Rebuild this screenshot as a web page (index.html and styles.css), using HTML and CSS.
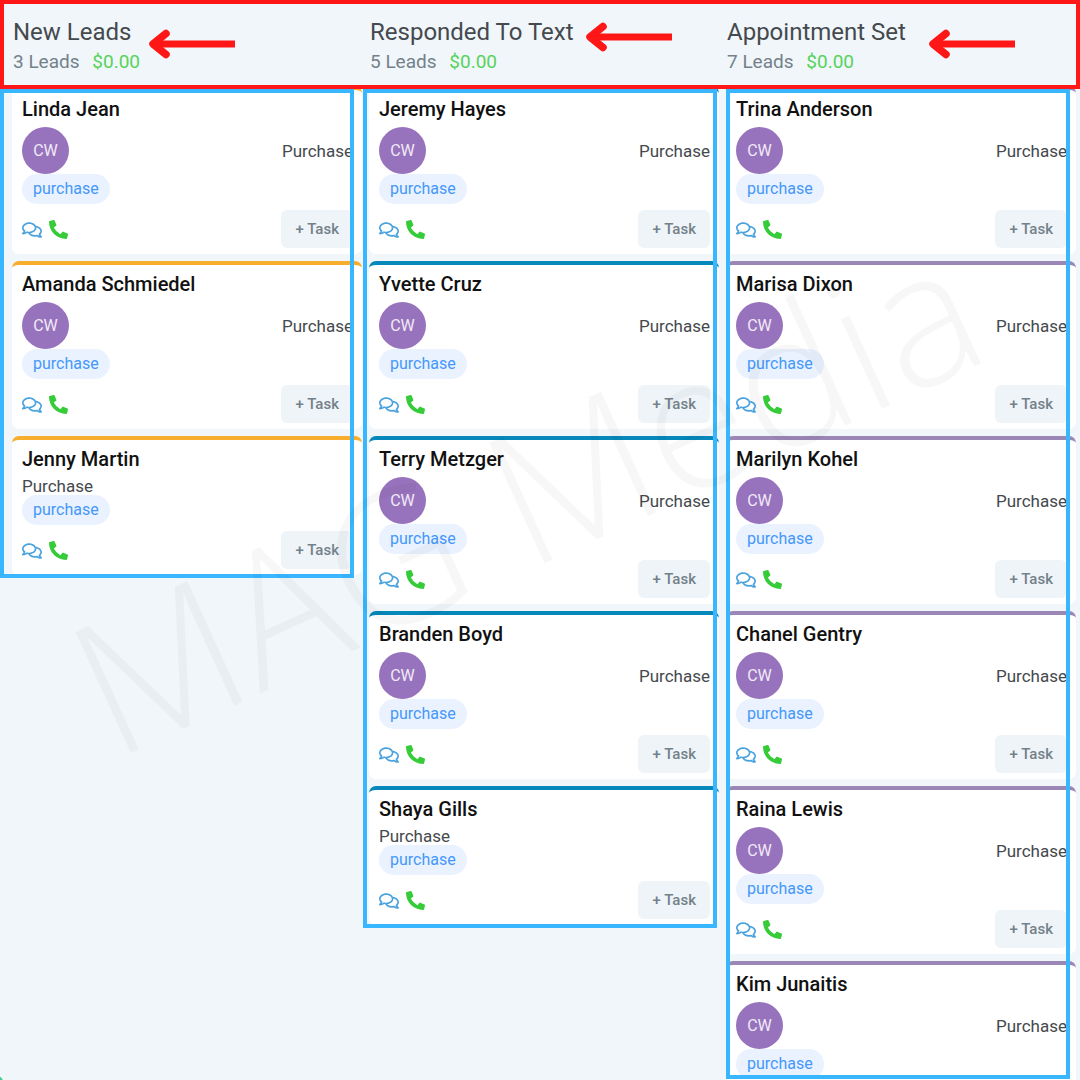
FILE: index.html
```html
<!DOCTYPE html>
<html lang="en">
<head>
    <meta charset="UTF-8">
    <meta name="viewport" content="width=device-width, initial-scale=1.0">
    <title>Leads</title>
    <link rel="stylesheet" href="styles.css">
</head>
<body>
    <svg class="sprite" aria-hidden="true">
        <symbol id="icon-comments" viewBox="0 0 576 512">
            <path d="M532 386.2c27.5-27.1 44-61.1 44-98.2 0-80-76.5-146.1-176.2-157.9C368.3 72.5 294.3 32 208 32 93.1 32 0 103.6 0 192c0 37 16.5 71 44 98.2-15.3 30.7-37.3 54.5-37.7 54.9-6.3 6.7-8.1 16.5-4.4 25 3.6 8.5 12 14 21.2 14 53.5 0 96.7-20.2 125.2-38.8 9.2 2.1 18.7 3.7 28.4 4.9C208.1 407.6 281.8 448 368 448c20.8 0 40.8-2.4 59.8-6.8C456.3 459.7 499.4 480 553 480c9.2 0 17.5-5.5 21.2-14 3.6-8.5 1.9-18.3-4.4-25-.4-.3-22.5-24.1-37.8-54.8zm-392.8-92.3L122.1 305c-14.1 9.1-28.5 16.3-43.1 21.4 2.7-4.7 5.4-9.7 8-14.8l15.5-31.1L77.7 256C64.2 242.6 48 220.7 48 192c0-60.7 73.3-112 160-112s160 51.3 160 112-73.3 112-160 112c-16.5 0-33-1.9-49-5.6l-19.8-4.5zM498.3 352l-24.7 24.4 15.5 31.1c2.6 5.1 5.3 10.1 8 14.8-14.6-5.1-29-12.3-43.1-21.4l-17.1-11.1-19.9 4.6c-16 3.7-32.5 5.6-49 5.6-54 0-102.2-20.1-131.3-49.7C338 339.5 416 272.9 416 192c0-3.4-.4-6.7-.7-10C479.7 196.5 528 238.8 528 288c0 28.7-16.2 50.6-29.7 64z"/>
        </symbol>
        <symbol id="icon-phone" viewBox="0 0 512 512">
            <path d="M497.39 361.8l-112-48a24 24 0 0 0-28 6.9l-49.6 60.6A370.66 370.66 0 0 1 130.6 204.11l60.6-49.6a23.94 23.94 0 0 0 6.9-28l-48-112A24.16 24.16 0 0 0 122.6.61l-104 24A24 24 0 0 0 0 48c0 256.5 207.9 464 464 464a24 24 0 0 0 23.4-18.6l24-104a24.29 24.29 0 0 0-14.01-27.6z"/>
        </symbol>
        <symbol id="icon-arrow" viewBox="0 0 88 30">
            <path d="M87 15H6" fill="none" stroke="currentColor" stroke-width="7"/>
            <path d="M18 4.5L5 15L18 25.5" fill="none" stroke="currentColor" stroke-width="7.5" stroke-linecap="round" stroke-linejoin="round"/>
        </symbol>
    </svg>

    <header class="stages">
        <div class="stage">
            <h2 class="stage-title">New Leads</h2>
            <p class="stage-info">3 Leads <span class="amount">$0.00</span></p>
            <svg class="arrow arrow-new"><use href="#icon-arrow"/></svg>
        </div>
        <div class="stage">
            <h2 class="stage-title">Responded To Text</h2>
            <p class="stage-info">5 Leads <span class="amount">$0.00</span></p>
            <svg class="arrow arrow-responded"><use href="#icon-arrow"/></svg>
        </div>
        <div class="stage">
            <h2 class="stage-title">Appointment Set</h2>
            <p class="stage-info">7 Leads <span class="amount">$0.00</span></p>
            <svg class="arrow arrow-appointment"><use href="#icon-arrow"/></svg>
        </div>
    </header>

    <main class="board">
        <section class="column column-new" aria-label="New Leads"></section>
        <section class="column column-responded" aria-label="Responded To Text"></section>
        <section class="column column-appointment" aria-label="Appointment Set"></section>
    </main>

    <div class="watermark">MAG Media</div>
    <div class="chat-dot"></div>

    <script>
        // owner: initials in the avatar, empty when nobody is assigned
        const leads = {
            '.column-new': [
                { name: 'Linda Jean', owner: 'CW' },
                { name: 'Amanda Schmiedel', owner: 'CW' },
                { name: 'Jenny Martin', owner: '' }
            ],
            '.column-responded': [
                { name: 'Jeremy Hayes', owner: 'CW' },
                { name: 'Yvette Cruz', owner: 'CW' },
                { name: 'Terry Metzger', owner: 'CW' },
                { name: 'Branden Boyd', owner: 'CW' },
                { name: 'Shaya Gills', owner: '' }
            ],
            '.column-appointment': [
                { name: 'Trina Anderson', owner: 'CW' },
                { name: 'Marisa Dixon', owner: 'CW' },
                { name: 'Marilyn Kohel', owner: 'CW' },
                { name: 'Chanel Gentry', owner: 'CW' },
                { name: 'Raina Lewis', owner: 'CW' },
                { name: 'Kim Junaitis', owner: 'CW' }
            ]
        };

        function card(lead) {
            const avatar = lead.owner ? `<span class="avatar">${lead.owner}</span>` : '';
            return `
                <article class="card">
                    <h3 class="card-name">${lead.name}</h3>
                    <div class="card-row">${avatar}<span class="card-type">Purchase</span></div>
                    <span class="tag">purchase</span>
                    <div class="card-actions">
                        <button class="icon-btn" type="button" aria-label="Messages"><svg class="icon-comments"><use href="#icon-comments"/></svg></button>
                        <button class="icon-btn" type="button" aria-label="Call"><svg class="icon-phone"><use href="#icon-phone"/></svg></button>
                        <button class="task-btn" type="button">+ Task</button>
                    </div>
                </article>`;
        }

        for (let selector in leads) {
            document.querySelector(selector).innerHTML = leads[selector].map(card).join('');
        }
    </script>
</body>
</html>
```

FILE: styles.css
```css
* {
    margin: 0;
    padding: 0;
    box-sizing: border-box;
}
body {
    position: relative;
    display: flex;
    flex-direction: column;
    height: 100vh;
    overflow: hidden;
    background-color: #f1f6fa;
    font-family: Roboto, "Liberation Sans", sans-serif;
    color: #44494e;
}
button {
    border: 0;
    font-family: inherit;
    cursor: pointer;
}
.sprite {
    position: absolute;
    width: 0;
    height: 0;
}

/* stage headers */
.stages,
.board {
    display: grid;
    grid-template-columns: repeat(3, 1fr);
    gap: 7px;
    padding: 0 4px 0 12px;
}
.stages {
    position: relative;
    z-index: 1;
    flex: none;
    padding-top: 15px;
    padding-bottom: 11px;
}
.stages::after {
    content: "";
    position: absolute;
    inset: 0 0 -3px;
    border: 4px solid #ff1616;
}
.stage {
    position: relative;
    padding-left: 1px;
}
.stage-title {
    font-size: 24px;
    line-height: 34px;
    font-weight: 400;
}
.stage-info {
    font-size: 19px;
    line-height: 26px;
    color: #73818a;
}
.amount {
    margin-left: 8px;
    color: #56d35b;
}
.arrow {
    position: absolute;
    width: 88px;
    height: 30px;
    color: #ff1616;
}
.arrow-new {
    left: 136px;
    top: 14px;
}
.arrow-responded {
    left: 216px;
    top: 7px;
}
.arrow-appointment {
    left: 202px;
    top: 14px;
}

/* board */
.board {
    flex: 1;
    min-height: 0;
    grid-template-rows: 100%;
    align-items: start;
}
.column {
    position: relative;
    display: flex;
    flex-direction: column;
    gap: 7px;
    max-height: 100%;
}
/* coloured outline around each column */
.column::after {
    content: "";
    position: absolute;
    border: 4px solid #38b6ff;
}
.column-new::after {
    inset: 3px 8px -3px -12px;
}
.column-responded::after {
    inset: 3px 2px -3px -6px;
}
.column-appointment::after {
    inset: 3px 6px 1px 0;
}

.card {
    flex: none;
    padding: 7px 9px 6px 10px;
    border-top: 4px solid #f9ad2c;
    border-radius: 7px;
    background-color: #fff;
}
.column-responded .card {
    border-top-color: #0788bb;
}
.column-appointment .card {
    border-top-color: #9b87b6;
}
.card-name {
    margin-bottom: 6px;
    font-size: 20px;
    line-height: 24px;
    font-weight: 500;
    color: #111;
}
.card-row {
    display: flex;
    align-items: center;
    justify-content: space-between;
}
.avatar {
    width: 47px;
    height: 47px;
    border-radius: 50%;
    background-color: #9873bd;
    color: #f0eaf6;
    font-size: 16px;
    line-height: 47px;
    text-align: center;
}
.card-type {
    font-size: 17px;
    line-height: 18px;
}
.tag {
    display: block;
    width: fit-content;
    padding: 0 11px;
    border-radius: 15px;
    background-color: #eaf2ff;
    color: #4598fa;
    font-size: 16px;
    line-height: 30px;
}
.card-actions {
    display: flex;
    align-items: center;
    gap: 7px;
    margin-top: 6px;
}
.icon-btn {
    display: flex;
    padding-top: 1px;
    background: none;
}
.icon-comments {
    width: 20px;
    height: 18px;
    fill: #4aa3df;
}
.icon-phone {
    width: 19px;
    height: 19px;
    fill: #36cb38;
}
.task-btn {
    height: 38px;
    margin-left: auto;
    padding: 0 14px;
    border-radius: 6px;
    background-color: #eff4f8;
    color: #73818a;
    font-size: 15px;
    font-weight: 500;
}

.watermark {
    position: absolute;
    left: 112px;
    bottom: 323px;
    z-index: 2;
    font-family: "Open Sans", sans-serif;
    font-size: 186px;
    line-height: 136px;
    font-weight: 300;
    white-space: nowrap;
    color: rgba(0, 0, 0, .032);
    transform: rotate(-24.6deg);
    transform-origin: left bottom;
    pointer-events: none;
}
.chat-dot {
    position: absolute;
    left: -9px;
    bottom: -8px;
    width: 12px;
    height: 12px;
    border-radius: 50%;
    background-color: #3ccf91;
}
```
